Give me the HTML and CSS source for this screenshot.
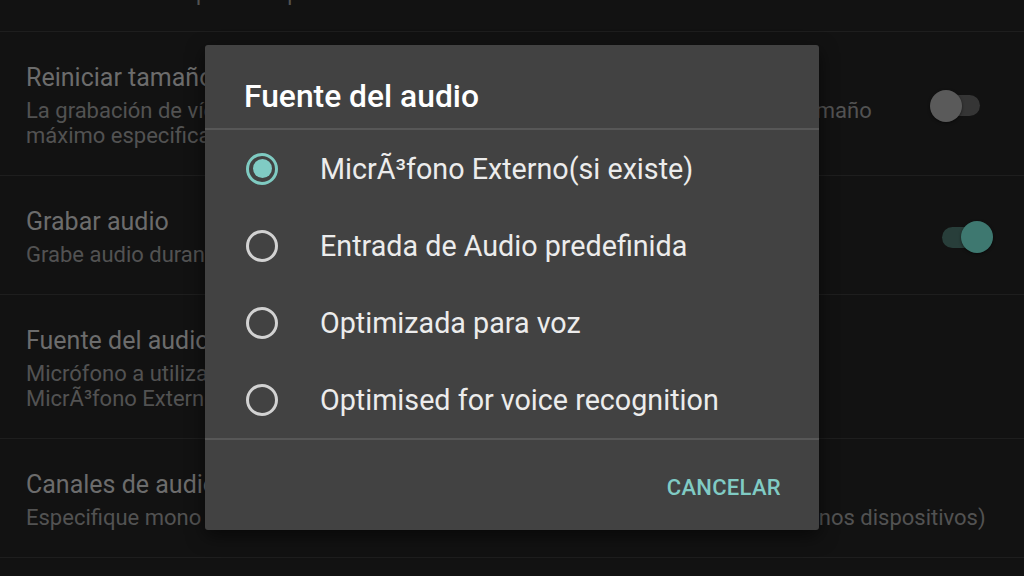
FILE: index.html
```html
<!DOCTYPE html>
<html lang="es">
<head>
    <meta charset="UTF-8">
    <meta name="viewport" content="width=device-width, initial-scale=1.0">
    <title>Ajustes de vídeo</title>
    <link rel="stylesheet" href="styles.css">
</head>
<body>

    <!-- Lista de ajustes (detrás del diálogo) -->
    <div class="prefs">
        <div class="pref pref-cut">
            <p class="summary">Tamaño máximo por cada parte del vídeo</p>
        </div>

        <div class="pref">
            <div class="pref-text">
                <p class="title">Reiniciar tamaño máximo de vídeo</p>
                <p class="summary">La grabación de vídeo se reiniciará de forma automática cuando se alcance su tamaño<br>máximo especificado</p>
            </div>
            <span class="switch"><span class="track"></span><span class="thumb"></span></span>
        </div>

        <div class="pref">
            <div class="pref-text">
                <p class="title">Grabar audio</p>
                <p class="summary">Grabe audio durante la grabación de vídeo</p>
            </div>
            <span class="switch on"><span class="track"></span><span class="thumb"></span></span>
        </div>

        <div class="pref">
            <div class="pref-text">
                <p class="title">Fuente del audio</p>
                <p class="summary">Micrófono a utilizar para la grabación de audio<br>MicrÃ³fono Externo(si existe)</p>
            </div>
        </div>

        <div class="pref">
            <div class="pref-text">
                <p class="title">Canales de audio</p>
                <p class="summary">Especifique mono o estéreo (la grabación en estéreo solo es compatible con algunos dispositivos)</p>
            </div>
        </div>
    </div>

    <!-- Diálogo -->
    <div class="dialog">
        <div class="dialog-head">Fuente del audio</div>
        <ul class="options">
            <li class="option checked"><span class="radio"></span>MicrÃ³fono Externo(si existe)</li>
            <li class="option"><span class="radio"></span>Entrada de Audio predefinida</li>
            <li class="option"><span class="radio"></span>Optimizada para voz</li>
            <li class="option"><span class="radio"></span>Optimised for voice recognition</li>
        </ul>
        <div class="dialog-foot">
            <button class="btn-text">CANCELAR</button>
        </div>
    </div>

</body>
</html>
```

FILE: styles.css
```css
/* Estilo global */
* {
    margin: 0;
    padding: 0;
    box-sizing: border-box;
}

body {
    font-family: Roboto, "Noto Sans", sans-serif;
    background-color: #121212;
    width: 1024px;
    height: 576px;
    overflow: hidden;
    position: relative;
}

/* Lista de ajustes */
.pref {
    display: flex;
    align-items: center;
    padding: 31px 31px 27px 26px;
    border-bottom: 1px solid #1e1e1e;
}

.pref-cut {
    height: 32px;
    padding: 0 26px;
    align-items: flex-start;
    overflow: hidden;
}

.pref-cut .summary {
    margin-top: -20px;
}

.pref-text {
    flex: 1;
    white-space: nowrap;
}

.title {
    font-size: 25px;
    line-height: 30px;
    color: #6c6c6c;
}

.summary {
    font-size: 22px;
    line-height: 25px;
    color: #525252;
    margin-top: 5px;
}

/* Interruptores */
.switch {
    position: relative;
    width: 63px;
    height: 32px;
    display: flex;
    align-items: center;
}

.track {
    width: 40px;
    height: 21px;
    margin-left: 10px;
    border-radius: 11px;
    background-color: #353535;
}

.thumb {
    position: absolute;
    top: 0;
    left: 0;
    width: 32px;
    height: 32px;
    border-radius: 50%;
    background-color: #5a5a5a;
    box-shadow: 0 1px 3px rgba(0, 0, 0, 0.5);
}

.switch.on .track {
    margin-left: 12px;
    background-color: #283e3a;
}

.switch.on .thumb {
    left: auto;
    right: 0;
    background-color: #3e7870;
}

/* Diálogo */
.dialog {
    position: absolute;
    left: 205px;
    top: 45px;
    width: 614px;
    height: 485px;
    background-color: #424242;
    border-radius: 3px;
    box-shadow: 0 6px 18px rgba(0, 0, 0, 0.55);
    display: flex;
    flex-direction: column;
}

.dialog-head {
    height: 85px;
    padding: 33px 39px 0;
    font-size: 31.8px;
    line-height: 36px;
    font-weight: 500;
    color: #ffffff;
    border-bottom: 2px solid #575757;
}

.options {
    list-style: none;
}

.option {
    height: 77px;
    display: flex;
    align-items: center;
    gap: 42px;
    padding-left: 41px;
    font-size: 28.7px;
    color: #ececec;
}

.radio {
    width: 32px;
    height: 32px;
    border: 3px solid #d2d2d2;
    border-radius: 50%;
    display: flex;
    align-items: center;
    justify-content: center;
    flex-shrink: 0;
}

.option.checked .radio {
    border-color: #7fcbc2;
}

.option.checked .radio::after {
    content: "";
    width: 19px;
    height: 19px;
    border-radius: 50%;
    background-color: #80cbc4;
}

.dialog-foot {
    flex: 1;
    display: flex;
    justify-content: flex-end;
    align-items: flex-start;
    padding: 36px 38px 0;
    border-top: 2px solid #575757;
}

.btn-text {
    background: none;
    border: none;
    font-family: inherit;
    font-size: 22px;
    line-height: 24px;
    letter-spacing: 0.3px;
    font-weight: 500;
    color: #80cbc4;
    cursor: pointer;
}
```
